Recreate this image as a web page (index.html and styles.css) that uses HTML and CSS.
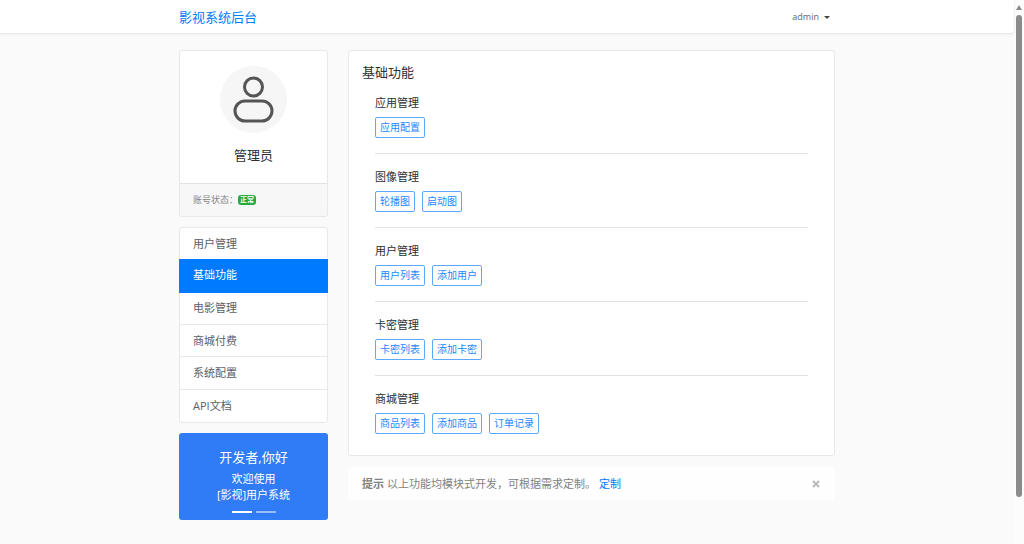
FILE: index.html
```html
<!DOCTYPE html>
<html lang="zh-CN">
<head>
<meta charset="utf-8">
<meta name="viewport" content="width=device-width, initial-scale=1">
<title>影视系统后台</title>
<link rel="stylesheet" href="styles.css">
</head>
<body>
<div class="page">
  <header class="topbar">
    <div class="container topbar-inner">
      <a class="brand" href="#">影视系统后台</a>
      <button class="user-menu" type="button">admin<span class="caret"></span></button>
    </div>
  </header>

  <div class="container layout">
    <aside class="sidebar">
      <section class="card profile">
        <div class="profile-body">
          <svg class="avatar" viewBox="0 0 67 67" role="img" aria-label="头像">
            <circle cx="33.5" cy="33.5" r="33.5" fill="#f6f6f6"/>
            <g fill="none" stroke="#555" stroke-width="3">
              <circle cx="33.5" cy="21" r="9"/>
              <rect x="15" y="35" width="37" height="20" rx="10"/>
            </g>
          </svg>
          <h2 class="heading">管理员</h2>
        </div>
        <div class="profile-footer">账号状态：<span class="badge">正常</span></div>
      </section>

      <nav class="card menu">
        <a class="menu-item" href="#">用户管理</a>
        <a class="menu-item active" href="#" aria-current="page">基础功能</a>
        <a class="menu-item" href="#">电影管理</a>
        <a class="menu-item" href="#">商城付费</a>
        <a class="menu-item" href="#">系统配置</a>
        <a class="menu-item" href="#">API文档</a>
      </nav>

      <section class="banner">
        <h2 class="heading">开发者,你好</h2>
        <p class="banner-text">欢迎使用<br>[影视]用户系统</p>
        <div class="indicators">
          <button class="indicator current" type="button" aria-label="第一张"></button>
          <button class="indicator" type="button" aria-label="第二张"></button>
        </div>
      </section>
    </aside>

    <main class="content">
      <section class="card panel">
        <h1 class="heading">基础功能</h1>
        <div class="groups">
          <section class="group">
            <h2 class="group-title">应用管理</h2>
            <div class="actions"><button class="btn" type="button">应用配置</button></div>
          </section>
          <section class="group">
            <h2 class="group-title">图像管理</h2>
            <div class="actions"><button class="btn" type="button">轮播图</button><button class="btn" type="button">启动图</button></div>
          </section>
          <section class="group">
            <h2 class="group-title">用户管理</h2>
            <div class="actions"><button class="btn" type="button">用户列表</button><button class="btn" type="button">添加用户</button></div>
          </section>
          <section class="group">
            <h2 class="group-title">卡密管理</h2>
            <div class="actions"><button class="btn" type="button">卡密列表</button><button class="btn" type="button">添加卡密</button></div>
          </section>
          <section class="group">
            <h2 class="group-title">商城管理</h2>
            <div class="actions"><button class="btn" type="button">商品列表</button><button class="btn" type="button">添加商品</button><button class="btn" type="button">订单记录</button></div>
          </section>
        </div>
      </section>

      <div class="notice" role="alert">
        <strong>提示</strong>
        <span>以上功能均模块式开发，可根据需求定制。</span>
        <a class="notice-link" href="#">定制</a>
        <button class="close" type="button" aria-label="关闭">
          <svg class="close-icon" viewBox="0 0 8 8"><path d="M1 1l6 6M7 1L1 7" stroke="#bbb" stroke-width="2"/></svg>
        </button>
      </div>
    </main>
  </div>
</div>

<div class="scrollbar" aria-hidden="true">
  <span class="scroll-arrow"></span>
  <span class="scroll-thumb"></span>
</div>
</body>
</html>
```

FILE: styles.css
```css
* {
  box-sizing: border-box;
}

body {
  margin: 0;
  display: flex;
  min-height: 100vh;
  background: #fafafa;
  color: #2b2f33;
  font-family: "Open Sans", "Noto Sans CJK SC", sans-serif;
  font-size: 11px;
  line-height: 16px;
}

h1, h2, p {
  margin: 0;
}

a {
  text-decoration: none;
}

button {
  font-family: inherit;
  cursor: pointer;
}

.page {
  flex: 1;
  min-width: 0;
}

.container {
  width: 100%;
  max-width: 656px;
  margin: 0 auto;
}

.topbar {
  position: relative;
  background: #fff;
  border-radius: 0 0 4px 0;
  box-shadow: 0 1px 3px rgba(0, 0, 0, .1);
}

.topbar::before {
  content: "";
  position: absolute;
  top: 0;
  left: 43%;
  width: 152px;
  height: 0;
  box-shadow: 0 0 3px rgba(0, 0, 0, .05);
}

.topbar-inner {
  display: flex;
  align-items: center;
  justify-content: space-between;
  padding: 8px 5px 7px 0;
}

.brand {
  color: #007bff;
  font-size: 13px;
  line-height: 18px;
}

.user-menu {
  display: flex;
  align-items: center;
  gap: 5px;
  padding: 0;
  border: 0;
  background: none;
  color: #666;
  font-size: 9px;
  line-height: 16px;
}

.caret {
  border: 3px solid transparent;
  border-top-color: #444;
  border-bottom: 0;
}

.layout {
  display: grid;
  grid-template-columns: 149px minmax(0, 1fr);
  gap: 20px;
  align-items: start;
  padding: 17px 0;
}

.sidebar, .content {
  display: grid;
  gap: 11px;
}

.sidebar {
  gap: 10px;
}

.card {
  background: #fff;
  border: 1px solid #e8e8e8;
  border-radius: 3px;
}

.heading {
  font-size: 13px;
  font-weight: 400;
  line-height: 16px;
}

.profile-body {
  display: grid;
  justify-items: center;
  gap: 14px;
  padding: 15px 13px 20px;
}

.avatar {
  width: 67px;
  height: 67px;
}

.profile-footer {
  display: flex;
  align-items: center;
  padding: 8px 13px;
  border-top: 1px solid #e2e2e2;
  border-radius: 0 0 2px 2px;
  background: #f7f7f7;
  color: #868686;
  font-size: 9px;
}

.badge {
  padding: 0 2px;
  border-radius: 3px;
  background: #28a745;
  color: #fff;
  font-size: 7px;
  font-weight: 700;
  line-height: 10px;
}

.menu {
  display: grid;
  grid-auto-rows: 1fr;
  min-height: 196px;
}

.menu-item {
  display: flex;
  align-items: center;
  padding: 0 13px;
  border-bottom: 1px solid #e8e8e8;
  color: #5a6067;
}

.menu-item:last-child {
  border-bottom: 0;
}

.menu-item.active {
  margin: -1px -1px 0;
  padding: 0 14px;
  border-color: #007bff;
  background: #007bff;
  color: #fff;
}

.banner {
  padding: 16px 13px 7px;
  border-radius: 3px;
  background: #307cf6;
  color: #fff;
  text-align: center;
}

.banner-text {
  padding: 6px 0 8px;
}

.indicators {
  display: flex;
  justify-content: center;
  gap: 4px;
}

.indicator {
  width: 20px;
  height: 2px;
  padding: 0;
  border: 0;
  background: #97bdfa;
}

.indicator.current {
  background: #fff;
}

.panel {
  padding: 13px 13px 21px;
}

.groups {
  padding: 16px 13px 0;
}

.group + .group {
  margin-top: 15px;
  padding-top: 16px;
  border-top: 1px solid #e2e2e2;
}

.group-title {
  font-size: 11px;
  font-weight: 400;
  line-height: 14px;
}

.actions {
  display: flex;
  flex-wrap: wrap;
  gap: 7px;
  padding-top: 7px;
}

.btn {
  padding: 2px 4px;
  border: 1px solid #5aa9ff;
  border-radius: 2px;
  background: #fff;
  color: #1a88ff;
  font-size: 10px;
  line-height: 15px;
}

.notice {
  display: flex;
  align-items: center;
  gap: 3px;
  padding: 9px 14px 8px;
  border-radius: 3px;
  background: #fefefe;
  color: #818182;
}

.notice-link {
  color: #007bff;
}

.close {
  display: flex;
  margin-left: auto;
  padding: 1px;
  border: 0;
  background: none;
}

.close-icon {
  width: 8px;
  height: 8px;
}

.scrollbar {
  display: flex;
  flex-direction: column;
  align-items: center;
  gap: 5px;
  width: 10px;
  height: 100vh;
  padding: 5px 0 47px;
  background: #fcfcfc;
}

.scroll-arrow {
  border: 3px solid transparent;
  border-top: 0;
  border-bottom: 5px solid #8b8b8b;
}

.scroll-thumb {
  flex: 1;
  width: 6px;
  border-radius: 3px;
  background: #8b8b8b;
}
```
